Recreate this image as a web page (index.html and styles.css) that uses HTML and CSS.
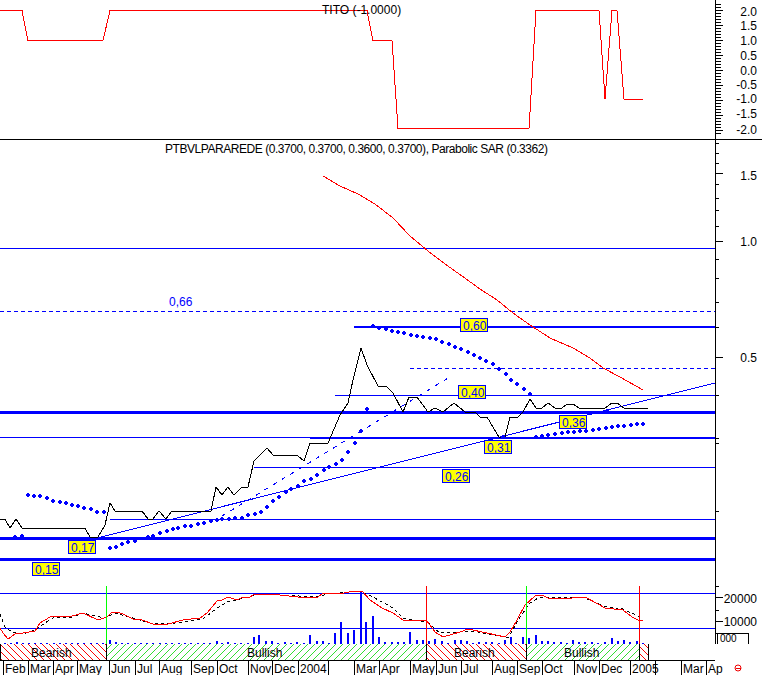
FILE: index.html
```html
<!DOCTYPE html>
<html lang="en">
<head>
  <meta charset="UTF-8">
  <title>PTBVLPARAREDE chart</title>
  <link rel="stylesheet" href="styles.css">
</head>
<body>
  <svg class="chart" viewBox="0 0 762 675" width="762" height="675">
    <defs>
      <pattern id="hatchRed" width="7" height="7" patternUnits="userSpaceOnUse" y="644">
        <path class="hatch-red" d="M0 0L7 7" />
      </pattern>
      <pattern id="hatchGreen" width="7" height="7" patternUnits="userSpaceOnUse" y="644">
        <path class="hatch-green" d="M0 7L7 0" />
      </pattern>
    </defs>

    <!-- TITO pane -->
    <path class="red" d="M0 10.5H22L28 40.5H103L110 10.5H367L373 40.5H392L398 128.5H529L536 10.5H599L605 99L612 10.5H617L624 99H643" />
    <text class="label" x="322" y="14">TITO (-1.0000)</text>
    <path class="black" d="M0 139.5H762" />

    <!-- price pane: levels -->
    <text class="label" x="165" y="153" textLength="383" lengthAdjust="spacing">PTBVLPARAREDE (0.3700, 0.3700, 0.3600, 0.3700), Parabolic SAR (0.3362)</text>
    <path class="blue" d="M0 248.5H715M335 395.5H715M0 437.5H715M254 467.5H715M110 519.5H715" />
    <path class="blue dashed" d="M0 311.5H715M410 368.5H715" />
    <path class="blue w2" d="M354 327H715M310 438H715" />
    <path class="blue w3" d="M0 412.5H715M0 538.5H715M0 559.5H715" />
    <path class="blue" d="M97 538L715 383" />
    <path class="blue dashdot" d="M222 516L453 375" />

    <!-- moving average and price -->
    <path class="red" d="M323 176L340 186L358 194L375 204L393 218L410 236L428 251L445 264L462 276L480 289L497 300L513 313L530 325L550 338L573 348L590 358L603 368L620 377L643 390" />
    <path class="black" d="M0 519H5L10 528L16 519L22 528H85L90 537H98L105 525L110 503L115 511H142L148 519H153L159 511L166 519L172 511H211L216 487L222 495L228 487L234 495L242 487H248L254 461L267 448L273 455H297L304 461L310 443H328L340 415L348 403L353 380L361 348L367 365L378 386H386L393 393L403 412L409 397H417L428 412L435 408L443 412L454 403L465 412H475L480 417H487L499 437H505L510 417H518L523 412L530 399L536 408H542L548 403L555 408H562L567 404H573L579 408H605L612 403H617L624 408H648" />

    <!-- parabolic SAR -->
    <path class="sar" d="M15 537h0M22 536h0M28 495h0M34 496h0M40 496h0M47 498h0M53 501h0M60 502h0M66 503h0M72 505h0M78 506h0M84 508h0M91 509h0M97 512h0M104 512h0M110 548h0M116 547h0M122 544h0M128 542h0M135 541h0M148 537h0M153 536h0M160 533h0M167 531h0M173 529h0M178 528h0M185 526h0M191 526h0M198 524h0M204 523h0M211 521h0M217 520h0M222 519h0M229 519h0M235 518h0M242 518h0M248 515h0M255 514h0M261 512h0M267 507h0M273 501h0M279 497h0M286 492h0M291 489h0M298 486h0M304 481h0M311 479h0M317 475h0M324 470h0M329 467h0M336 464h0M342 460h0M348 452h0M355 443h0M361 431h0M367 409h0" />
    <path class="sar" d="M373 326h0M379 328h0M386 329h0M392 331h0M398 332h0M404 333h0M411 335h0M417 336h0M423 337h0M430 338h0M436 339h0M442 342h0M449 344h0M455 347h0M461 349h0M468 352h0M474 355h0M480 358h0M486 361h0M493 364h0M499 369h0M506 374h0M511 380h0M517 384h0M524 389h0M530 394h0M491 439h0M503 437h0M536 437h0M542 436h0M548 435h0M555 434h0M562 433h0M568 432h0M574 432h0M580 431h0M586 431h0M591 413h0M593 430h0M599 429h0M606 428h0M607 411h0M612 427h0M618 426h0M624 426h0M631 425h0M637 424h0M643 424h0" />

    <!-- level tags -->
    <text class="level" x="169" y="306">0,66</text>
    <g>
      <rect class="tag" x="460.5" y="318.5" width="27" height="13" /><text class="level" x="463" y="329.5">0,60</text>
      <rect class="tag" x="458.5" y="385.5" width="27" height="13" /><text class="level" x="461" y="396.5">0,40</text>
      <rect class="tag" x="559.5" y="415.5" width="27" height="13" /><text class="level" x="562" y="426.5">0,36</text>
      <rect class="tag" x="484.5" y="440.5" width="27" height="13" /><text class="level" x="487" y="451.5">0,31</text>
      <rect class="tag" x="442.5" y="469.5" width="27" height="13" /><text class="level" x="445" y="480.5">0,26</text>
      <rect class="tag" x="68.5" y="540.5" width="27" height="13" /><text class="level" x="71" y="551.5">0,17</text>
      <rect class="tag" x="32.5" y="562.5" width="27" height="13" /><text class="level" x="35" y="573.5">0,15</text>
    </g>

    <!-- volume pane -->
    <path class="blue" d="M0 593.5H715M0 628.5H715" />
    <path class="volume" d="M5 644v-1M11 644v-1M17 644v-2M23 644v-1M29 644v-1M35 644v-1M41 644v-1M47 644v-1M54 644v-1M60 644v-1M66 644v-1M72 644v-1M78 644v-1M84 644v-1M91 644v-1M97 644v-1M103 644v-1M110 644v-4M116 644v-2M122 644v-1M128 644v-1M135 644v-1M141 644v-1M147 644v-1M153 644v-1M160 644v-1M166 644v-1M172 644v-1M179 644v-1M185 644v-1M191 644v-1M198 644v-1M204 644v-1M210 644v-1M217 644v-3M222 644v-1M228 644v-2M235 644v-1M241 644v-1M248 644v-1M254 644v-7M259 644v-9M266 644v-3M272 644v-3M278 644v-1M285 644v-2M291 644v-1M297 644v-2M304 644v-1M310 644v-9M317 644v-3M323 644v-3M329 644v-1M335 644v-11M341 644v-22M348 644v-11M354 644v-14M361 644v-53M366 644v-22M373 644v-28M379 644v-7M385 644v-2M392 644v-2M398 644v-2M404 644v-2M410 644v-12M417 644v-4M423 644v-4M429 644v-3M435 644v-5M442 644v-3M448 644v-1M455 644v-4M461 644v-4M467 644v-3M473 644v-1M479 644v-2M486 644v-2M492 644v-2M499 644v-1M505 644v-4M511 644v-7M516 644v-1M523 644v-7M529 644v-6M536 644v-9M542 644v-3M548 644v-3M554 644v-2M561 644v-2M567 644v-1M573 644v-4M579 644v-2M585 644v-2M592 644v-2M598 644v-1M605 644v-2M612 644v-6M618 644v-3M624 644v-4M630 644v-2M637 644v-3M643 644v-1" />
    <path class="black dashed-fine" d="M0 614L5 627L12 632L23 634L35 630L45 623L55 617L72 617L83 613L100 617L107 617L115 613L133 618L150 623L167 624L183 622L203 619L217 608L227 602L240 599L260 594L280 595L317 597L327 594L360 591L373 597L393 608L403 618L427 622L440 633L460 632L473 631L493 635L508 638L520 617L530 603L538 598L583 597L603 606L623 609L640 617" />
    <path class="red" d="M0 628L3 633L8 639L15 634L23 633L35 631L40 623L50 617L72 616L83 613L98 620L107 617L112 612L117 612L123 614L133 619L142 620L153 624L168 624L183 620L200 618L207 613L217 601L222 600L228 597L237 600L243 597L250 597L255 594L280 595L307 598L318 597L323 593L335 593L340 594L353 591L362 591L370 600L382 608L393 613L403 620L427 621L435 632L443 637L460 632L468 629L487 633L505 637L510 632L517 620L525 605L535 596L542 595L548 598L572 598L578 597L585 597L598 604L605 608L623 610L632 617L638 620L643 620" />

    <!-- signal band -->
    <rect class="band-red" x="0" y="644" width="106" height="16" />
    <rect class="band-green" x="106" y="644" width="320" height="16" />
    <rect class="band-red" x="426" y="644" width="100" height="16" />
    <rect class="band-green" x="526" y="644" width="113" height="16" />
    <rect class="band-red" x="639" y="644" width="10" height="16" />
    <path class="black" d="M0.5 644V660M106.5 644V660M426.5 644V660M526.5 644V660M639.5 644V660M648.5 644V660" />
    <path class="green" d="M106.5 586V644M526.5 586V644" />
    <path class="red" d="M426.5 586V644M639.5 586V644" />
    <text class="label" x="31" y="657">Bearish</text>
    <text class="label" x="247" y="657">Bullish</text>
    <text class="label" x="454" y="657">Bearish</text>
    <text class="label" x="564" y="657">Bullish</text>

    <!-- dates -->
    <path class="black" d="M0 660.5H715M3.5 660V675M28.5 660V675M53.5 660V675M77.5 660V675M109.5 660V675M135.5 660V675M159.5 660V675M191.5 660V675M217.5 660V675M248.5 660V675M272.5 660V675M298.5 660V675M328.5 660V675M354.5 660V675M379.5 660V675M410.5 660V675M436.5 660V675M461.5 660V675M492.5 660V675M517.5 660V675M542.5 660V675M574.5 660V675M599.5 660V675M630.5 660V675M655.5 660V675M681.5 660V675M706.5 660V675" />
    <text class="label" x="5" y="673">Feb</text>
    <text class="label" x="30" y="673">Mar</text>
    <text class="label" x="55" y="673">Apr</text>
    <text class="label" x="79" y="673">May</text>
    <text class="label" x="111" y="673">Jun</text>
    <text class="label" x="137" y="673">Jul</text>
    <text class="label" x="161" y="673">Aug</text>
    <text class="label" x="193" y="673">Sep</text>
    <text class="label" x="219" y="673">Oct</text>
    <text class="label" x="250" y="673">Nov</text>
    <text class="label" x="274" y="673">Dec</text>
    <text class="label" x="300" y="673">2004</text>
    <text class="label" x="356" y="673">Mar</text>
    <text class="label" x="381" y="673">Apr</text>
    <text class="label" x="412" y="673">May</text>
    <text class="label" x="438" y="673">Jun</text>
    <text class="label" x="463" y="673">Jul</text>
    <text class="label" x="494" y="673">Aug</text>
    <text class="label" x="519" y="673">Sep</text>
    <text class="label" x="544" y="673">Oct</text>
    <text class="label" x="576" y="673">Nov</text>
    <text class="label" x="601" y="673">Dec</text>
    <text class="label" x="632" y="673">2005</text>
    <text class="label" x="683" y="673">Mar</text>
    <text class="label" x="708" y="673">Ap</text>

    <!-- right axis -->
    <path class="black" d="M715.5 0V644" />
    <path class="ticks" d="M718 4V136" />
    <path class="black" d="M716 10.5H723M716 25.5H723M716 40.5H723M716 55.5H723M716 70.5H723M716 85.5H723M716 100.5H723M716 115.5H723M716 130.5H723" />
    <path class="black" d="M716 143.5H719M716 153.5H719M716 163.5H719M716 173.5H723M716 184.5H719M716 198.5H719M716 210.5H719M716 226.5H719M716 241.5H723M716 259.5H719M716 278.5H719M716 302.5H719M716 327.5H719M716 357.5H723M716 395.5H719M716 438.5H719M716 443.5H719M716 511.5H719M716 586.5H719M716 597.5H723M716 610.5H719M716 621.5H723" />
    <path class="black" d="M717.5 633V644M715 633.5H748M748.5 633V644" />
    <text class="axis-small" x="720" y="642">000</text>
    <g class="axis">
      <text x="757" y="16">2.0</text>
      <text x="757" y="30">1.5</text>
      <text x="757" y="45">1.0</text>
      <text x="757" y="60">0.5</text>
      <text x="757" y="75">0.0</text>
      <text x="757" y="89">-0.5</text>
      <text x="757" y="103">-1.0</text>
      <text x="757" y="118">-1.5</text>
      <text x="757" y="134">-2.0</text>
      <text x="757" y="180">1.5</text>
      <text x="757" y="246">1.0</text>
      <text x="757" y="362">0.5</text>
      <text x="757" y="603">20000</text>
      <text x="757" y="626">10000</text>
    </g>

    <!-- status mark -->
    <circle class="status" cx="738" cy="668" r="3" />
    <path class="status" d="M735.5 668H740.5" />
  </svg>
</body>
</html>
```
FILE: styles.css
```css
html, body {
  margin: 0;
  padding: 0;
  background: #fff;
  overflow: hidden;
}
.chart {
  display: block;
  font-family: "Liberation Sans", Arial, sans-serif;
  font-size: 12px;
}
.chart path, .chart rect {
  shape-rendering: crispEdges;
}
.chart path {
  fill: none;
}
.black { stroke: #000; stroke-width: 1; }
.red { stroke: #f00; stroke-width: 1; }
.green { stroke: #0f0; stroke-width: 1; }
.blue { stroke: #00f; stroke-width: 1; }
.blue.w2 { stroke-width: 2; }
.blue.w3 { stroke-width: 3; }
.blue.dashed { stroke-dasharray: 4 3; }
.blue.dashdot { stroke-dasharray: 4 6; }
.dashed-fine { stroke-dasharray: 3 3; }
.sar {
  stroke: #00f;
  stroke-width: 3.5;
  stroke-linecap: round;
}
.chart .volume {
  stroke: #00f;
  stroke-width: 2;
}
.ticks {
  stroke: #000;
  stroke-width: 5;
  stroke-dasharray: 1 2;
}
.hatch-red { stroke: #f00; stroke-width: 1; }
.hatch-green { stroke: #3d3; stroke-width: 1; }
.band-red { fill: url(#hatchRed); }
.band-green { fill: url(#hatchGreen); }
.tag {
  fill: #ff0;
  stroke: #00f;
  stroke-width: 1;
}
.label { fill: #000; }
.level { fill: #00f; }
.axis text {
  fill: #000;
  text-anchor: end;
}
.axis-small {
  fill: #000;
  font-size: 10px;
}
.status {
  fill: none;
  stroke: #e00;
  stroke-width: 1;
}
```
